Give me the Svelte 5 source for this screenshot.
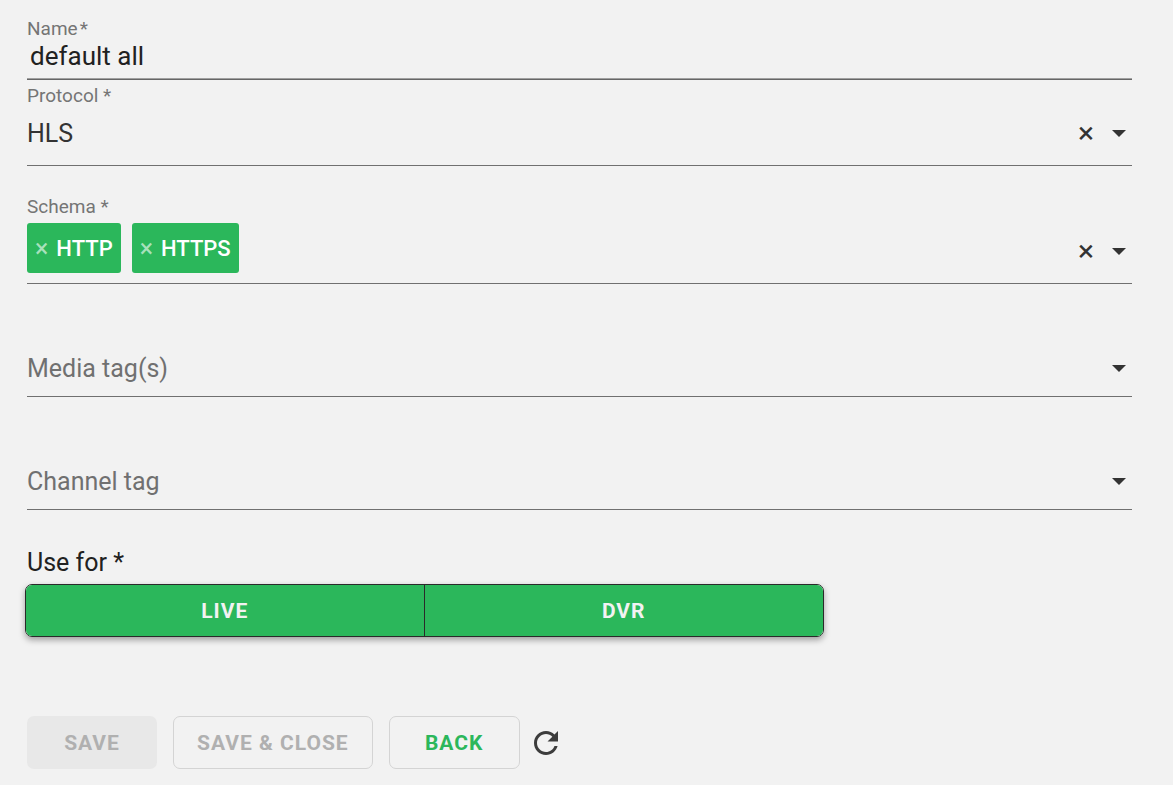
<script lang="ts">
    let name = $state('default all');
    let protocol = $state('HLS');
    let schemas = $state(['HTTP', 'HTTPS']);
    let mediaTag = $state('');
    let channelTag = $state('');
    let live = $state(true);
    let dvr = $state(true);

    function removeSchema(schema: string) {
        schemas = schemas.filter((item) => item !== schema);
    }
</script>

{#snippet arrow()}
    <svg class="arrow" viewBox="0 0 14 7" aria-hidden="true">
        <path d="M0 0h14L7 7z" />
    </svg>
{/snippet}

<form class="form" onsubmit={(e) => e.preventDefault()}>
    <div class="name-field">
        <label for="name">Name<span class="required">*</span></label>
        <input id="name" type="text" bind:value={name} />
    </div>

    <div class="field protocol">
        <label for="protocol">Protocol *</label>
        <div class="control">
            <select id="protocol" bind:value={protocol}>
                <option value=""></option>
                <option value="HLS">HLS</option>
            </select>
            <button type="button" class="clear" aria-label="Clear protocol" onclick={() => (protocol = '')}>×</button>
            {@render arrow()}
        </div>
    </div>

    <div class="field schema">
        <span class="label" id="schema-label">Schema *</span>
        <div class="control" role="group" aria-labelledby="schema-label">
            <div class="tags">
                {#each schemas as schema}
                    <span class="tag">
                        <button type="button" class="remove" aria-label="Remove {schema}" onclick={() => removeSchema(schema)}>×</button>
                        {schema}
                    </span>
                {/each}
            </div>
            <button type="button" class="clear" aria-label="Clear schema" onclick={() => (schemas = [])}>×</button>
            {@render arrow()}
        </div>
    </div>

    <div class="field tag-field">
        <div class="control">
            <select class="placeholder" aria-label="Media tag(s)" bind:value={mediaTag}>
                <option value="">Media tag(s)</option>
            </select>
            {@render arrow()}
        </div>
    </div>

    <div class="field tag-field">
        <div class="control">
            <select class="placeholder" aria-label="Channel tag" bind:value={channelTag}>
                <option value="">Channel tag</option>
            </select>
            {@render arrow()}
        </div>
    </div>

    <div class="use-for" id="use-for">Use for *</div>
    <div class="toggle-group" role="group" aria-labelledby="use-for">
        <button type="button" class:active={live} aria-pressed={live} onclick={() => (live = !live)}>LIVE</button>
        <button type="button" class:active={dvr} aria-pressed={dvr} onclick={() => (dvr = !dvr)}>DVR</button>
    </div>

    <div class="actions">
        <button type="submit" class="btn btn-save" disabled>SAVE</button>
        <button type="button" class="btn" disabled>SAVE &amp; CLOSE</button>
        <button type="button" class="btn btn-back">BACK</button>
        <button type="button" class="refresh" aria-label="Refresh">
            <svg viewBox="0 0 24 24" aria-hidden="true">
                <path d="M17.65 6.35C16.2 4.9 14.21 4 12 4c-4.42 0-7.99 3.58-7.99 8s3.57 8 7.99 8c3.73 0 6.84-2.55 7.73-6h-2.08c-.82 2.33-3.04 4-5.65 4-3.31 0-6-2.69-6-6s2.69-6 6-6c1.66 0 3.14.69 4.22 1.78L13 11h7V4l-2.35 2.35z" />
            </svg>
        </button>
    </div>
</form>

<style>
    :global(body) {
        margin: 0;
        background-color: #f2f2f2;
    }

    .form {
        padding: 17px 41px 16px 27px;
        font-family: Roboto, 'Liberation Sans', sans-serif;
        font-size: 25px;
        line-height: 30px;
        color: #212121;
    }

    button,
    input,
    select {
        font: inherit;
        margin: 0;
    }

    button {
        cursor: pointer;
    }

    button:disabled {
        cursor: default;
    }

    label,
    .label {
        display: block;
        font-size: 19px;
        line-height: 24px;
        color: #757575;
    }

    .required {
        margin-left: 2px;
    }

    input {
        display: block;
        box-sizing: border-box;
        width: 100%;
        height: 39px;
        padding: 0 3px 9px;
        border: none;
        border-bottom: 1px solid #666;
        border-radius: 0;
        box-shadow: inset 0 -1px #a0a0a0;
        background: none;
        color: #212121;
        font-size: 26px;
        outline: none;
    }

    .control {
        display: flex;
        align-items: center;
        padding-right: 6px;
        border-bottom: 1px solid #707070;
    }

    .protocol {
        margin-top: 4px;
    }

    .protocol .control {
        padding-bottom: 7px;
    }

    .schema {
        margin-top: 29px;
    }

    .schema .control {
        height: 64px;
    }

    .tag-field {
        margin-top: 59px;
    }

    .tag-field .control {
        padding-bottom: 3px;
    }

    select {
        box-sizing: border-box;
        flex: 1;
        min-width: 0;
        height: 50px;
        padding: 2px 0 0;
        border: none;
        appearance: none;
        background: none;
        color: #333;
        outline: none;
    }

    select.placeholder {
        color: #707070;
    }

    .clear {
        padding: 0;
        width: 24px;
        margin-right: 14px;
        border: none;
        background: none;
        color: #333;
        font-size: 30px;
        font-weight: 400;
    }

    .arrow {
        width: 14px;
        height: 7px;
        fill: #333;
    }

    .tags {
        display: flex;
        flex: 1;
        gap: 11px;
        padding-bottom: 6px;
    }

    .tag {
        display: flex;
        align-items: center;
        gap: 8px;
        box-sizing: border-box;
        height: 50px;
        padding: 1px 8px 0;
        border-radius: 3px;
        background-color: #2bb75b;
        color: #fff;
        font-size: 22px;
        font-weight: 500;
    }

    .remove {
        padding: 0;
        border: none;
        background: none;
        color: rgba(255, 255, 255, 0.6);
        font-size: 25px;
        font-weight: 400;
    }

    .use-for {
        margin-top: 38px;
    }

    .toggle-group {
        display: grid;
        grid-template-columns: 1fr 1fr;
        box-sizing: border-box;
        width: 799px;
        max-width: 100%;
        height: 53px;
        margin: 6px 0 0 -2px;
        overflow: hidden;
        border: 1px solid #2a2a2a;
        border-radius: 7px;
        box-shadow: 0 3px 6px rgba(0, 0, 0, 0.35);
    }

    .toggle-group button {
        padding: 0;
        border: none;
        background-color: #f2f2f2;
        color: #333;
        font-size: 21px;
        font-weight: 700;
        letter-spacing: 1px;
    }

    .toggle-group button:first-child {
        border-right: 1px solid #2a2a2a;
    }

    .toggle-group button.active {
        background-color: #2bb75b;
        color: #f2f2f2;
    }

    .actions {
        display: flex;
        align-items: center;
        margin-top: 79px;
    }

    .btn {
        height: 53px;
        margin-right: 16px;
        padding: 0 23px;
        border: 1px solid #d4d4d4;
        border-radius: 7px;
        background: none;
        color: #b0b0b0;
        font-size: 21px;
        font-weight: 700;
        letter-spacing: 1px;
    }

    .btn-save {
        min-width: 130px;
        border: none;
        background-color: #e8e8e8;
    }

    .btn-back {
        min-width: 131px;
        margin-right: 8px;
        color: #2bb75b;
    }

    .refresh {
        padding: 0;
        border: none;
        background: none;
    }

    .refresh svg {
        display: block;
        width: 36px;
        height: 36px;
        fill: #3c3c3c;
    }
</style>
